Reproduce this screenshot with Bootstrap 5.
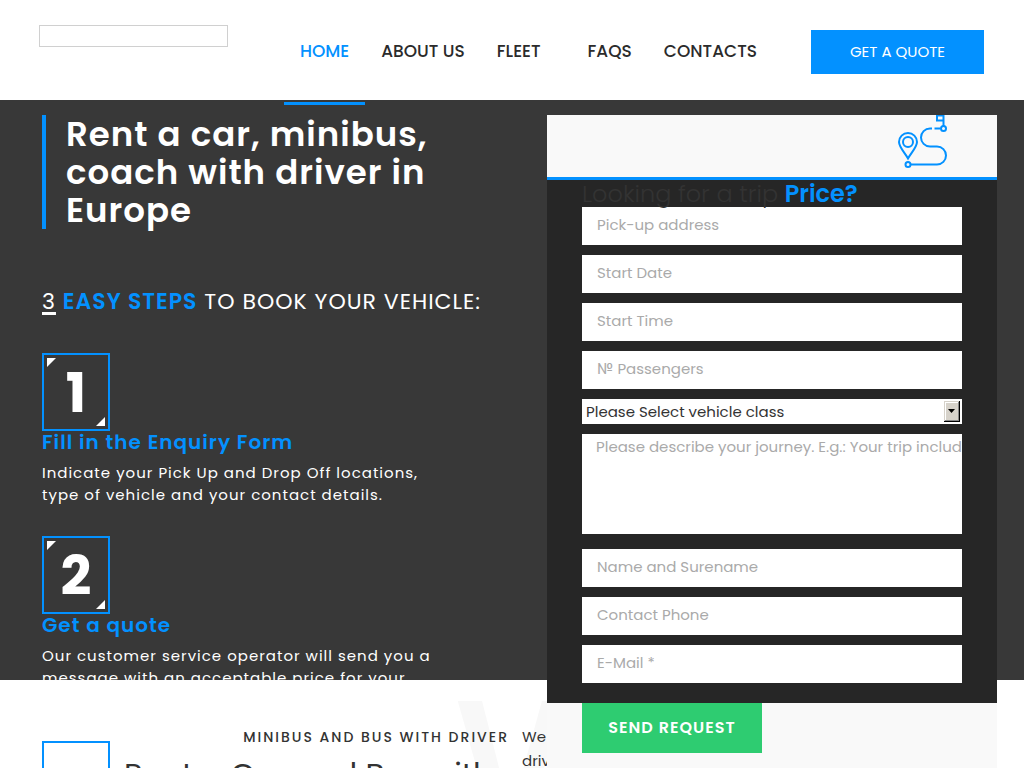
<!DOCTYPE html>
<html lang="en">
<head>
<meta charset="utf-8">
<meta name="viewport" content="width=device-width, initial-scale=1">
<title>Rent a car, minibus, coach with driver in Europe</title>
<link href="https://cdn.jsdelivr.net/npm/bootstrap@5.3.0/dist/css/bootstrap.min.css" rel="stylesheet">
<style>
:root { --brand: #0391ff; --ink: #333; }
body { font-family: Poppins, Inter, "Open Sans", sans-serif; color: var(--ink); overflow-x: hidden; }
.site-header { height: 100px; padding: 0 40px 0 39px; }
.logo-box { width: 189px; height: 22px; margin-top: 25px; border: 1px solid #d0d0d0; }
.main-menu { margin-left: 56px; }
.main-menu .nav-link { padding: 39px 16px; font-size: 17px; line-height: 24px; font-weight: 500; color: #2b2b2b; border-bottom: 3px solid transparent; }
.main-menu .nav-link.active { color: var(--brand); border-color: var(--brand); }
.main-menu .has-sub { margin-right: 15px; }
.btn-quote { width: 173px; height: 44px; margin-top: 30px; padding: 0; font-size: 15px; color: #fff; background: var(--brand); }
.btn-quote:hover { color: #fff; background: #1789e0; }
.wrap { max-width: 970px; margin: 0 auto; }
.hero { height: 580px; background: #383838; color: #fff; }
.hero-copy { width: 470px; padding: 15px 0 0 15px; overflow: hidden; }
.hero h1 { width: 400px; margin: 0 0 60px; padding-left: 20px; border-left: 4px solid var(--brand); font-size: 34px; line-height: 38px; font-weight: 600; letter-spacing: 1px; }
.hero h2 { margin: 0 0 38px; font-size: 22px; line-height: 26px; font-weight: 400; letter-spacing: 1px; white-space: nowrap; }
.hero h2 span { text-decoration: underline; text-decoration-thickness: 3px; text-underline-offset: 3px; }
.hero h2 b { color: var(--brand); font-weight: 600; }
.step-item { width: 390px; margin-bottom: 30px; }
.num-box { position: relative; width: 68px; height: 78px; border: 2px solid var(--brand); font-size: 54px; line-height: 76px; font-weight: 700; text-align: center; }
.step-item .num-box::before, .step-item .num-box::after { content: ""; position: absolute; width: 9px; height: 9px; background: #fff; }
.step-item .num-box::before { left: 3px; top: 3px; clip-path: polygon(0 0, 100% 0, 0 100%); }
.step-item .num-box::after { right: 3px; bottom: 3px; clip-path: polygon(100% 0, 100% 100%, 0 100%); }
.step-item h3 { margin: 0 0 9px; font-size: 20px; line-height: 22px; font-weight: 600; letter-spacing: 1px; color: var(--brand); }
.step-item p { margin: 0; font-size: 15px; line-height: 22px; letter-spacing: 1px; }
.quote-card { position: relative; z-index: 2; width: 450px; align-self: flex-start; margin-top: 15px; background: #f9f9f9; color: var(--ink); }
.quote-head { height: 65px; border-bottom: 3px solid var(--brand); padding-right: 49px; }
.quote-body { padding: 0 35px 20px; background: #262626; }
.quote-body h2 { margin: 0; font-size: 24px; line-height: 27px; font-weight: 300; letter-spacing: 0; color: #333; }
.quote-body h2 b { font-weight: 600; color: var(--brand); }
.quote-body .form-control { height: 38px; margin-bottom: 10px; padding: 5px 15px 9px; border: 0; border-radius: 0; font-size: 15px; line-height: 24px; font-weight: 400; }
.quote-body .form-control::placeholder { color: #aaa; }
.quote-body textarea.form-control { height: 100px; margin-bottom: 15px; padding: 1px 0 0 14px; resize: none; white-space: pre; overflow: hidden; }
.class-pick { position: relative; margin-bottom: 10px; }
.class-pick select { appearance: none; width: 100%; height: 25px; padding: 0 24px 0 4px; border: 0; border-radius: 0; background: #fff; color: var(--ink); font-size: 15px; line-height: 25px; display: block; }
.class-pick svg { position: absolute; right: 2px; top: 2px; pointer-events: none; }
.quote-foot { padding: 0 35px 40px; }
.btn-send { width: 180px; height: 50px; border-radius: 0; background: #2ecc71; color: #fff; font-size: 16px; line-height: 26px; font-weight: 600; letter-spacing: 1px; }
.about { position: relative; overflow: hidden; padding: 45px 0 60px; background: #fff; }
.about .wrap { padding-left: 15px; }
.big-letter { position: absolute; left: 454px; top: -10px; font-size: 200px; line-height: 200px; font-weight: 500; color: #f8f8f8; }
.about-head { position: relative; width: 467px; }
.about-head .label-line { margin: 0 0 6px; font-size: 14px; line-height: 24px; font-weight: 500; letter-spacing: 2px; text-align: right; white-space: nowrap; }
.about-head h2 { margin: 0; padding-left: 82px; font-size: 31px; line-height: 38px; font-weight: 400; white-space: nowrap; }
.about-head .num-box { position: absolute; left: 0; top: 16px; }
.about-text { position: relative; margin: 0 0 0 13px; font-size: 15px; line-height: 24px; font-weight: 400; }
</style>
</head>
<body>
<header class="site-header d-flex align-items-start bg-white">
  <a href="#" class="logo-box d-block flex-shrink-0" aria-label="Home"></a>
  <nav class="main-menu" aria-label="Main">
    <ul class="nav flex-nowrap text-nowrap">
      <li class="nav-item"><a class="nav-link active" aria-current="page" href="#">HOME</a></li>
      <li class="nav-item"><a class="nav-link" href="#">ABOUT US</a></li>
      <li class="nav-item has-sub"><a class="nav-link" href="#">FLEET</a></li>
      <li class="nav-item"><a class="nav-link" href="#">FAQS</a></li>
      <li class="nav-item"><a class="nav-link" href="#">CONTACTS</a></li>
    </ul>
  </nav>
  <button type="button" class="btn btn-quote rounded-0 ms-auto flex-shrink-0">GET A QUOTE</button>
</header>

<section class="hero">
  <div class="wrap d-flex justify-content-between h-100">
    <div class="hero-copy">
      <h1>Rent a car, minibus, coach with driver in Europe</h1>
      <h2><span>3</span> <b>EASY STEPS</b> TO BOOK YOUR VEHICLE:</h2>
      <div class="step-item">
        <div class="num-box">1</div>
        <h3>Fill in the Enquiry Form</h3>
        <p>Indicate your Pick Up and Drop Off locations, type of vehicle and your contact details.</p>
      </div>
      <div class="step-item">
        <div class="num-box">2</div>
        <h3>Get a quote</h3>
        <p>Our customer service operator will send you a message with an acceptable price for your</p>
      </div>
    </div>

    <form class="quote-card">
      <div class="quote-head d-flex justify-content-end">
        <svg width="50" height="54" viewBox="0 0 50 54" fill="none" stroke="#0391ff" stroke-width="2" aria-hidden="true">
          <path d="M10 43.500C7 38 1 32 1 27a9 9 0 0 1 18 0C19 32 13 38 10 43.500Z"/>
          <circle cx="10" cy="27" r="5"/>
          <circle cx="10" cy="49.500" r="2.500"/>
          <path d="M13 49.500H39a9 9 0 0 0 0-18H32a9 9 0 0 1 0-18H34M36.500 13.500H42"/>
          <circle cx="45.500" cy="13.500" r="2.500"/>
          <path d="M45.500 11V0M45.500 5.500H39V0.500H45.500"/>
        </svg>
      </div>
      <div class="quote-body">
        <h2>Looking for a trip <b>Price?</b></h2>
        <input class="form-control" type="text" placeholder="Pick-up address" aria-label="Pick-up address">
        <input class="form-control" type="text" placeholder="Start Date" aria-label="Start Date">
        <input class="form-control" type="text" placeholder="Start Time" aria-label="Start Time">
        <input class="form-control" type="text" placeholder="№ Passengers" aria-label="№ Passengers">
        <div class="class-pick">
          <select aria-label="Vehicle class"><option>Please Select vehicle class</option></select>
          <svg width="16" height="21" viewBox="0 0 16 21" aria-hidden="true">
            <path fill="#000" d="M0 0H16V21H0Z"/><path fill="#d6d2ca" d="M0 0H15V20H0Z"/>
            <path fill="#888" d="M14 1H15V20H1V19H14Z"/><path fill="#fff" d="M1 1H14V2H2V19H1Z"/>
            <path fill="#000" d="M4 8H11L7.500 12Z"/>
          </svg>
        </div>
        <textarea class="form-control" placeholder="Please describe your journey. E.g.: Your trip including" aria-label="Journey description"></textarea>
        <input class="form-control" type="text" placeholder="Name and Surename" aria-label="Name and Surename">
        <input class="form-control" type="tel" placeholder="Contact Phone" aria-label="Contact Phone">
        <input class="form-control mb-0" type="email" placeholder="E-Mail *" aria-label="E-Mail">
      </div>
      <div class="quote-foot"><button type="submit" class="btn btn-send p-0 d-block">SEND REQUEST</button></div>
    </form>
  </div>
</section>

<section class="about">
  <span class="big-letter" aria-hidden="true">W</span>
  <div class="wrap d-flex">
    <div class="about-head flex-shrink-0">
      <div class="num-box"></div>
      <p class="label-line">MINIBUS AND BUS WITH DRIVER</p>
      <h2>Rent a Car and Bus with</h2>
    </div>
    <p class="about-text">We<br>drive</p>
  </div>
</section>
<script src="https://cdn.jsdelivr.net/npm/bootstrap@5.3.0/dist/js/bootstrap.bundle.min.js"></script>
</body>
</html>
